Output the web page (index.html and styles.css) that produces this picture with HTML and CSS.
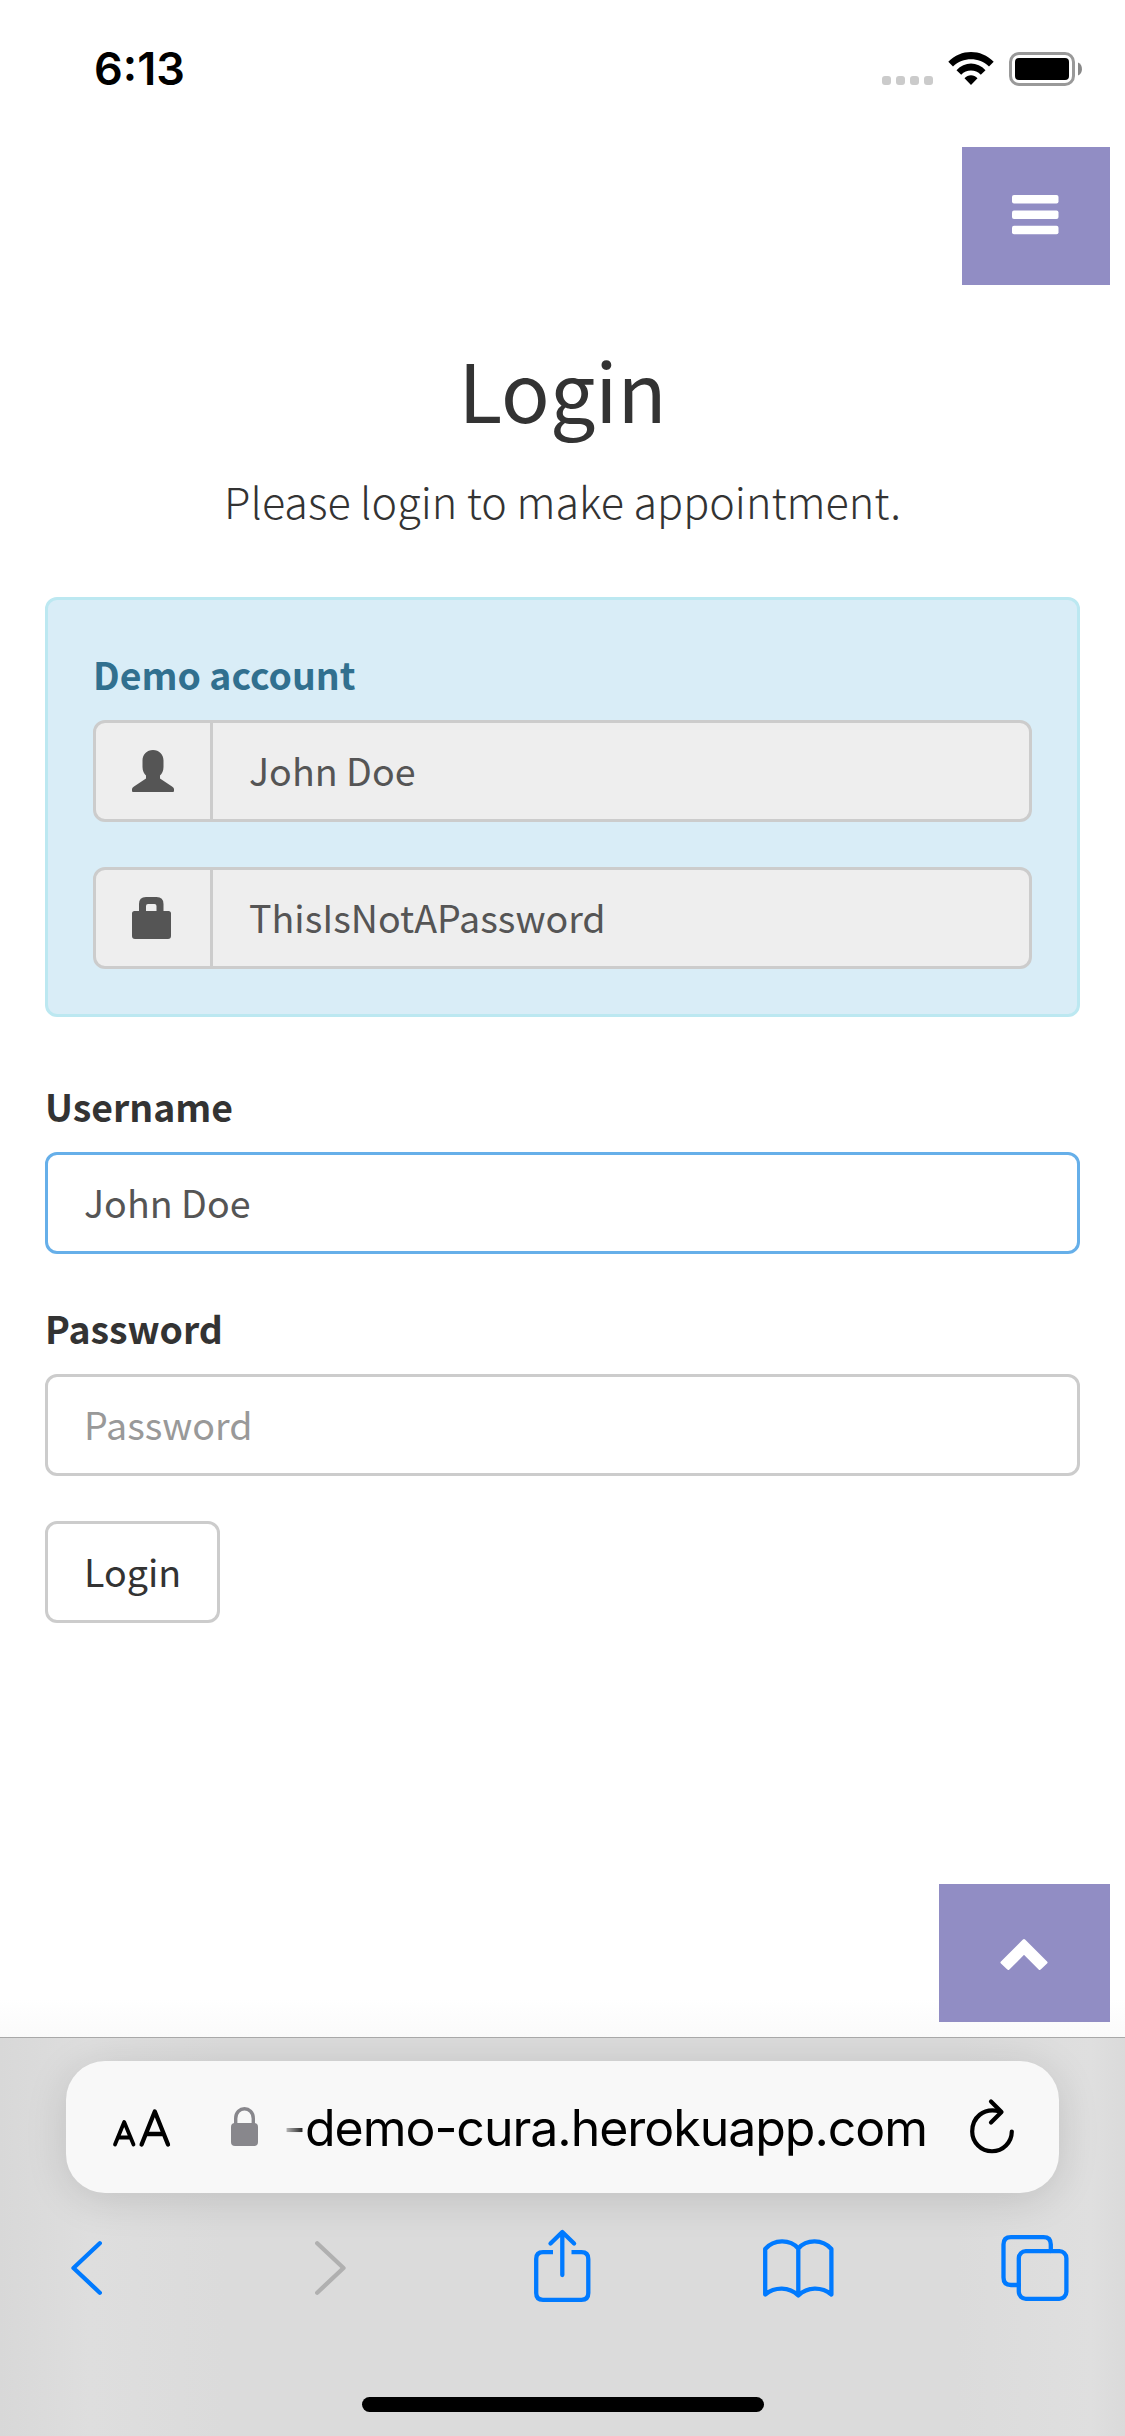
FILE: index.html
```
<!DOCTYPE html>
<html lang="en">
<head>
<meta charset="utf-8">
<title>Login</title>
<link rel="stylesheet" href="styles.css">
</head>
<body>
<div class="screen">
  <header class="status">
    <span class="time">6:13</span>
    <svg class="status-icons" width="202" height="36" viewBox="881 51 202 36">
      <g fill="#cbcbcb"><rect x="882" y="76" width="9" height="9" rx="3"/><rect x="896" y="76" width="9" height="9" rx="3"/><rect x="910" y="76" width="9" height="9" rx="3"/><rect x="924" y="76" width="9" height="9" rx="3"/></g>
      <path d="M948.3 61.8C961 48.8 981 48.8 993.7 61.8L989 66.5C979 56.8 963 56.8 953 66.5ZM956.5 70.2C964.5 61.3 977.500 61.300 985.500 70.200L980.800 74.800C975.500 69.200 966.500 69.200 961.200 74.800ZM964.500 78.200C968 74.200 974 74.200 977.500 78.200L971 85Z"/>
      <rect x="1010.500" y="53.500" width="63" height="31" rx="8.500" fill="none" stroke="#999" stroke-width="3"/>
      <rect x="1015" y="58" width="54" height="22" rx="4"/>
      <path d="M1078 62.500C1083.300 64.500 1083.300 73.500 1078 75.500Z" fill="#888"/>
    </svg>
  </header>

  <main class="page">
    <div class="menu-row">
      <a class="square menu"><svg width="48" height="40" viewBox="0 0 48 40" fill="#fff"><rect x="0" y="0" width="46.500" height="8.400" rx="2"/><rect x="0" y="15.500" width="46.500" height="8.400" rx="2"/><rect x="0" y="30.800" width="46.500" height="8.400" rx="2"/></svg></a>
    </div>
    <h1 class="title">Login</h1>
    <p class="lead">Please login to make appointment.</p>

    <section class="well">
      <div class="label demo">Demo account</div>
      <div class="group">
        <span class="addon"><svg width="42" height="42" viewBox="0 0 42 42"><path d="M21 0C27 0 31.500 4.500 31.500 10.500V17C31.500 21 30 23.500 28 25.500V28.500L40 36.500Q42 37.500 42 39V41Q42 42 41 42H1Q0 42 0 41V39Q0 37.500 2 36.500L14 28.500V25.500C12 23.500 10.500 21 10.500 17V10.500C10.500 4.500 15 0 21 0Z"/></svg></span>
        <span class="value">John Doe</span>
      </div>
      <div class="group">
        <span class="addon"><svg width="42" height="42" viewBox="0 0 42 42"><path fill-rule="evenodd" d="M7 14V7Q7 0 14 0H24.500Q31.500 0 31.500 7V14H36.500Q39 14 39 16.500V39Q39 42 36 42H3Q0 42 0 39V16.500Q0 14 2.500 14ZM14 14H24.500V9Q24.500 7 22.500 7H16Q14 7 14 9Z"/></svg></span>
        <span class="value">ThisIsNotAPassword</span>
      </div>
    </section>

    <form class="form">
      <div class="label">Username</div>
      <div class="field focus">John Doe</div>
      <div class="label">Password</div>
      <div class="field hint">Password</div>
      <div class="field button">Login</div>
    </form>
    <div class="top-row">
      <a class="square up"><svg width="50" height="34" viewBox="0 0 50 34"><path d="M25 2.500L47 24.500L40.700 30.500L25 14.800L9.300 30.500L3 24.500Z" fill="#fff" stroke="#fff" stroke-width="3" stroke-linejoin="round"/></svg></a>
    </div>
  </main>

  <footer class="browser">
    <div class="address">
      <svg class="reader" width="62" height="42" viewBox="111 2107 62 42" fill="none" stroke="#000" stroke-linecap="round" stroke-linejoin="round"><path stroke-width="3.800" d="M115 2144.500L124.200 2122L133.500 2144.500M118.500 2137.500H130"/><path stroke-width="4.300" d="M141.600 2144.500L154.800 2111.500L168 2144.500M146 2134H163.500"/></svg>
      <svg class="lock" width="28" height="40" viewBox="0 0 28 40"><rect x="0" y="16" width="27" height="23" rx="4" fill="#88878c"/><path d="M4.700 18V11.500C4.700 -1.500 22.300 -1.500 22.300 11.500V18" fill="none" stroke="#88878c" stroke-width="3.400"/></svg>
      <span class="url">-demo-cura.herokuapp.com</span>
      <svg class="reload" width="46" height="56" viewBox="970 2097 46 56" fill="none" stroke="#000" stroke-width="4.200" stroke-linecap="round" stroke-linejoin="round"><path d="M1001 2110.500C984 2106 973.200 2117 973.200 2130.500A19.800 19.800 0 0 0 1012.800 2130.500"/><path d="M992 2100.500L1002.500 2111L992 2121.500"/></svg>
    </div>
    <nav class="tools">
      <svg width="1002" height="76" viewBox="62 2228 1002 76" fill="none" stroke="#007aff" stroke-width="4.300" stroke-linecap="round" stroke-linejoin="round" overflow="visible">
        <path d="M99.800 2243.300L73.500 2268L99.800 2292.700"/>
        <path d="M317.200 2243.300L343.500 2268L317.200 2292.700" stroke="#b0b0b0"/>
        <path stroke-linecap="butt" d="M553 2252.200H543Q536.200 2252.200 536.200 2259V2293Q536.200 2299.800 543 2299.800H581.500Q588.300 2299.800 588.300 2293V2259Q588.300 2252.200 581.500 2252.200H571.500"/>
        <path d="M562.300 2275V2232.500M550.500 2243.500L562.300 2232L574.100 2243.500"/>
        <path d="M798.300 2295.500V2248.500C790 2239 774 2239 765.200 2249V2294.500C775 2286.500 789 2286.500 798.300 2295.500C807.600 2286.500 821.600 2286.500 831.400 2294.500V2249C822.600 2239 806.600 2239 798.300 2248.500"/>
        <rect x="1018.800" y="2251.200" width="47.600" height="47.600" rx="7"/>
        <path d="M1018.800 2285H1011Q1003.500 2285 1003.500 2277.500V2244.500Q1003.500 2237.200 1011 2237.200H1043.500Q1050.800 2237.200 1050.800 2244.500V2251"/>
      </svg>
    </nav>
    <div class="home"></div>
  </footer>
</div>
</body>
</html>
```
FILE: styles.css
```
* { box-sizing: border-box; }
body { margin: 0; background: #fff; }
.screen {
  width: 1125px; height: 2436px; overflow: hidden;
  display: flex; flex-direction: column;
  font-family: "Noto Sans CJK JP", "Source Sans Pro", sans-serif;
  font-size: 37.600px; line-height: 58px; color: #333;
}
svg { display: block; flex: none; }

.status {
  height: 147px; flex: none; display: flex; align-items: flex-start; justify-content: space-between;
  padding: 51px 42px 0 94px;
}
.time { font: 600 45px/36px Inter, sans-serif; color: #000; }

.page { height: 1890px; flex: none; padding: 0 45px; background: linear-gradient(#fff 98%, #fafafa); }
.menu-row, .top-row { display: flex; justify-content: flex-end; margin-right: -30px; }
.square { height: 138px; display: flex; background: #918dc4; }
.menu { width: 148px; padding: 48px 0 0 50px; }
.up { width: 171px; padding: 54px 0 0 60px; }

.title { margin: 54px 0 0; font-size: 80.500px; font-weight: 400; line-height: 99px; text-align: center; }
.lead { margin: 31px 0 0; font-size: 43.100px; font-weight: 300; line-height: 63px; text-align: center; }

.well {
  margin-top: 65px; height: 420px; padding: 45px;
  border: 3px solid #bce8f1; border-radius: 12px; background: #d9edf7;
}
.label { height: 60px; margin-bottom: 15px; font-size: 37.400px; font-weight: 700; }
.demo { color: #31708f; }
.group {
  display: flex; height: 102px; margin-bottom: 45px;
  border: 3px solid #ccc; border-radius: 12px; background: #eee; color: #555;
}
.addon { width: 117px; padding: 27px 0 0 36px; border-right: 3px solid #ccc; }
.addon svg { fill: #555; }
.value { padding: 18px 36px; }

.form { margin-top: 60px; }
.field {
  height: 102px; margin-bottom: 45px; padding: 18px 36px;
  border: 3px solid #ccc; border-radius: 12px; background: #fff; color: #555;
}
.focus { border-color: #66afe9; }
.hint { color: #999; }
.button { width: 175px; color: #333; margin-bottom: 0; }
.top-row { margin-top: 261px; }

.browser {
  height: 399px; flex: none; display: flex; flex-direction: column; align-items: center;
  padding-top: 23px; border-top: 1px solid #a8a8a8;
  background: linear-gradient(90deg, #d8d8d8, #dedede 8%, #dbdbdb 20%, #dbdbdb 85%, #dfdfdf 97%, #dadada);
  overflow: hidden;
}
.address {
  width: 993px; height: 132px; flex: none; display: flex; align-items: flex-start;
  border-radius: 39px; background: #f8f8f8; box-shadow: 0 6px 42px rgba(0, 0, 0, .13);
}
.reader { margin: 46px 0 0 45px; }
.lock { margin: 46px 0 0 58px; }
.url {
  width: 668px; margin: 37px 0 0 20px; padding-left: 4px; white-space: nowrap; color: #000;
  font: 400 50px/60px Inter, sans-serif; letter-spacing: -1.030px;
  -webkit-mask-image: linear-gradient(90deg, transparent, #000 28px);
  mask-image: linear-gradient(90deg, transparent, #000 28px);
}
.reload { margin: 37px 0 0 22px; }
.tools { margin-top: 35px; }
.home { width: 402px; height: 15px; margin-top: 93px; border-radius: 8px; background: #000; }
```
